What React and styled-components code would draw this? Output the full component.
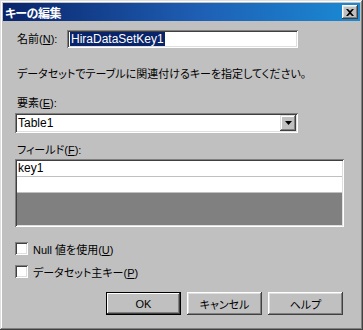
import React from 'react';
import styled, { createGlobalStyle } from 'styled-components';

const GlobalStyle = createGlobalStyle`
  html, body {
    margin: 0;
    padding: 0;
    background: #c0c0c0;
  }
  * {
    box-sizing: border-box;
  }
`;

const FONT = `"Liberation Sans", "Noto Sans CJK JP", sans-serif`;

const Window = styled.div`
  width: 363px;
  height: 330px;
  background: #c0c0c0;
  box-shadow: inset -1px -1px #404040, inset 1px 1px #dfdfdf,
    inset -2px -2px #808080, inset 2px 2px #ffffff;
  padding: 3px;
  font-family: ${FONT};
  font-size: 11px;
  font-feature-settings: "palt";
  color: #000;
  display: flex;
  flex-direction: column;
`;

const TitleBar = styled.div`
  height: 18px;
  background: linear-gradient(to right, #0a246a 0%, #1e5fb4 55%, #1a8ad4 100%);
  display: flex;
  align-items: center;
  justify-content: space-between;
  padding: 0 2px 0 2px;
`;

const Title = styled.span`
  color: #fff;
  font-weight: bold;
  font-size: 12px;
  letter-spacing: -0.5px;
`;

const CloseButton = styled.div`
  width: 16px;
  height: 14px;
  background: #c0c0c0;
  box-shadow: inset -1px -1px #404040, inset 1px 1px #ffffff,
    inset -2px -2px #808080, inset 2px 2px #dfdfdf;
  display: flex;
  align-items: center;
  justify-content: center;
`;

const Body = styled.div`
  padding: 0 14px 0 12px;
  display: flex;
  flex-direction: column;
`;

const NameRow = styled.div`
  margin-top: 9px;
  display: flex;
  align-items: center;
  height: 18px;
`;

const Label = styled.div`
  padding-left: 2px;
  height: 14px;
  line-height: 14px;
  white-space: nowrap;
  margin-top: ${(p) => p.$top || 0}px;
`;

const NameLabel = styled(Label)`
  width: 52px;
`;

const Sunken = styled.div`
  background: #fff;
  box-shadow: inset 1px 1px #808080, inset -1px -1px #ffffff,
    inset 2px 2px #404040, inset -2px -2px #dfdfdf;
`;

const TextInput = styled(Sunken)`
  width: 231px;
  height: 18px;
  padding: 2px 3px;
  line-height: 14px;
  font-size: 12px;
`;

const Selected = styled.span`
  background: #0a246a;
  color: #fff;
  padding: 0 1px;
`;

const Combo = styled(Sunken)`
  margin-top: 3px;
  width: 283px;
  height: 20px;
  display: flex;
  align-items: center;
  justify-content: space-between;
  padding: 2px 2px 2px 3px;
  font-size: 12px;
`;

const DropButton = styled.div`
  width: 16px;
  height: 16px;
  background: #c0c0c0;
  box-shadow: inset -1px -1px #404040, inset 1px 1px #dfdfdf,
    inset -2px -2px #808080, inset 2px 2px #ffffff;
  display: flex;
  align-items: center;
  justify-content: center;
`;

const ListBox = styled(Sunken)`
  margin-top: 2px;
  width: 329px;
  height: 68px;
  padding: 2px;
  display: flex;
  flex-direction: column;
  font-size: 12px;
`;

const ListRow = styled.div`
  height: 16px;
  line-height: 15px;
  padding-left: 1px;
  background: #fff;
  border-bottom: 1px solid #c0c0c0;
`;

const ListEmpty = styled.div`
  flex: 1;
  background: #808080;
`;

const CheckRow = styled.div`
  margin-top: ${(p) => p.$top}px;
  display: flex;
  align-items: center;
  height: 13px;
`;

const CheckBox = styled(Sunken)`
  width: 13px;
  height: 13px;
  margin-right: 5px;
`;

const ButtonBar = styled.div`
  margin-top: 14px;
  display: flex;
  justify-content: flex-end;
  gap: 6px;
  padding-right: 3px;
`;

const Button = styled.div`
  width: 75px;
  height: 23px;
  background: #c0c0c0;
  display: flex;
  align-items: center;
  justify-content: center;
  box-shadow: ${(p) =>
    p.$default
      ? 'inset 0 0 0 1px #000, inset -2px -2px #404040, inset 2px 2px #ffffff, inset -3px -3px #808080'
      : 'inset -1px -1px #404040, inset 1px 1px #ffffff, inset -2px -2px #808080, inset 2px 2px #dfdfdf'};
`;

const U = styled.span`
  text-decoration: underline;
`;

const CloseIcon = () => (
  <svg width="8" height="7" viewBox="0 0 8 7">
    <path d="M0 0h2l2 2 2-2h2L5 3.5 8 7H6L4 5 2 7H0l3-3.5z" fill="#000" />
  </svg>
);

const ArrowIcon = () => (
  <svg width="7" height="4" viewBox="0 0 7 4">
    <path d="M0 0h7L3.5 4z" fill="#000" />
  </svg>
);

const App = () => {
  return (
    <>
      <GlobalStyle />
      <Window>
        <TitleBar>
          <Title>キーの編集</Title>
          <CloseButton>
            <CloseIcon />
          </CloseButton>
        </TitleBar>

        <Body>
          {/* name */}
          <NameRow>
            <NameLabel>
              名前(<U>N</U>):
            </NameLabel>
            <TextInput>
              <Selected>HiraDataSetKey1</Selected>
            </TextInput>
          </NameRow>

          <Label $top={19}>データセットでテーブルに関連付けるキーを指定してください。</Label>

          {/* element */}
          <Label $top={15}>
            要素(<U>E</U>):
          </Label>
          <Combo>
            <span>Table1</span>
            <DropButton>
              <ArrowIcon />
            </DropButton>
          </Combo>

          {/* fields */}
          <Label $top={10}>
            フィールド(<U>F</U>):
          </Label>
          <ListBox>
            <ListRow>key1</ListRow>
            <ListRow />
            <ListEmpty />
          </ListBox>

          <CheckRow $top={15}>
            <CheckBox />
            <span>
              Null 値を使用(<U>U</U>)
            </span>
          </CheckRow>
          <CheckRow $top={10}>
            <CheckBox />
            <span>
              データセット主キー(<U>P</U>)
            </span>
          </CheckRow>

          <ButtonBar>
            <Button $default>OK</Button>
            <Button>キャンセル</Button>
            <Button>ヘルプ</Button>
          </ButtonBar>
        </Body>
      </Window>
    </>
  );
};

export default App;
